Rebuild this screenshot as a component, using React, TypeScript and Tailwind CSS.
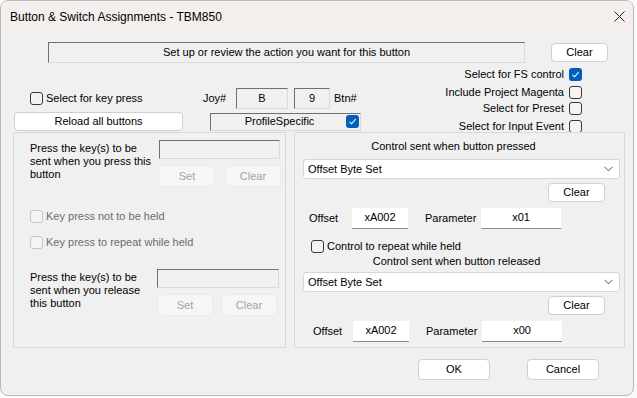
import React from "react";

const font = "font-['Liberation_Sans',Arial,sans-serif] text-[11px] leading-none text-black";

function Check({ checked = false, disabled = false }: { checked?: boolean; disabled?: boolean }) {
  if (checked) {
    return (
      <span className="flex h-[13px] w-[13px] shrink-0 items-center justify-center rounded-[3px] bg-[#005fb8]">
        <svg width="9" height="9" viewBox="0 0 9 9" fill="none">
          <path d="M1.5 4.8 L3.6 6.8 L7.6 2.2" stroke="#fff" strokeWidth="1.1" />
        </svg>
      </span>
    );
  }
  return (
    <span
      className={
        "h-[13px] w-[13px] shrink-0 rounded-[3px] border bg-[#f4f4f4] " +
        (disabled ? "border-[#c4c4c4]" : "border-[#3a3a3a]")
      }
    />
  );
}

function Btn({ label, className = "", disabled = false }: { label: string; className?: string; disabled?: boolean }) {
  return (
    <div
      className={
        "flex items-center justify-center rounded-[4px] border " +
        (disabled ? "border-[#ececec] bg-[#f6f6f6] text-[#a2a2a2] " : "border-[#d0d0d0] bg-white ") +
        className
      }
    >
      {label}
    </div>
  );
}

function Sunken({ children, className = "" }: { children?: React.ReactNode; className?: string }) {
  return (
    <div
      className={
        "flex items-center justify-center border border-t-[#6f6f6f] border-l-[#6f6f6f] border-r-[#dadada] border-b-[#dadada] " +
        className
      }
    >
      {children}
    </div>
  );
}

function Field({ value, className = "" }: { value: string; className?: string }) {
  return (
    <div className={"flex h-[21px] items-center justify-center border-b border-[#8a8a8a] bg-white pb-[2px] " + className}>
      {value}
    </div>
  );
}

function Combo({ value }: { value: string }) {
  return (
    <div className="ml-[8px] flex h-[20px] w-[317px] items-center justify-between rounded-[3px] border border-[#d6d6d6] bg-white pl-[4px] pr-[6px]">
      <span>{value}</span>
      <svg width="9" height="6" viewBox="0 0 9 6" fill="none">
        <path d="M0.5 0.8 L4.5 4.8 L8.5 0.8" stroke="#555" strokeWidth="1" />
      </svg>
    </div>
  );
}

function KeyBlock({ lines, gap, second }: { lines: string[]; gap: number; second?: boolean }) {
  return (
    <div className="flex">
      <div className={(second ? "w-[127px]" : "w-[129px]") + " pt-[2px] leading-[13px]"}>
        {lines.map((l) => (
          <div key={l}>{l}</div>
        ))}
      </div>
      <div className="flex flex-col">
        <Sunken className={(second ? "w-[122px]" : "w-[121px]") + " h-[19px]"} />
        <div className={"mt-[6px] flex " + (gap === 10 ? "gap-[10px]" : "gap-[8px]")}>
          <Btn label="Set" disabled className="h-[22px] w-[56px]" />
          <Btn label="Clear" disabled className="h-[22px] w-[56px]" />
        </div>
      </div>
    </div>
  );
}

function ControlBlock({ title, param, first }: { title: string; param: string; first: boolean }) {
  return (
    <div className="flex flex-col">
      <div className={"flex h-[14px] items-center justify-center " + (first ? "pr-[12px]" : "pr-[6px]")}>{title}</div>
      <div className={first ? "mt-[6px]" : "mt-[4px]"}>
        <Combo value="Offset Byte Set" />
      </div>
      <div className="mt-[4px] flex justify-end pr-[19px]">
        <Btn label="Clear" className="h-[19px] w-[57px]" />
      </div>
      <div className={"mt-[6px] flex items-center " + (first ? "pl-[14px]" : "pl-[18px]")}>
        <span className={first ? "w-[43px]" : "w-[40px]"}>Offset</span>
        <Field value="xA002" className="w-[56px]" />
        <span className="ml-[17px] w-[56px]">Parameter</span>
        <Field value={param} className="w-[80px]" />
      </div>
    </div>
  );
}

export default function App() {
  return (
    <div className={"h-[398px] w-[637px] bg-[#fafafa] " + font}>
      <div className="flex h-[396px] w-[634px] flex-col overflow-hidden rounded-[8px] border border-[#b9b9b9] bg-[#f0f0f0]">
        {/* title bar */}
        <div className="flex h-[31px] shrink-0 items-center justify-between bg-[#f4efed] pl-[9px] pr-[8px]">
          <span className="text-[12px]">Button &amp; Switch Assignments - TBM850</span>
          <svg width="11" height="11" viewBox="0 0 11 11">
            <path d="M0.5 0.5 L10.5 10.5 M10.5 0.5 L0.5 10.5" stroke="#222" strokeWidth="1" />
          </svg>
        </div>

        {/* status row */}
        <div className="mt-[10px] flex items-start">
          <Sunken className="ml-[47px] h-[21px] w-[477px]">Set up or review the action you want for this button</Sunken>
          <Btn label="Clear" className="ml-[26px] mt-[1px] h-[19px] w-[57px]" />
        </div>

        {/* options */}
        <div className="flex h-[69px]">
          <div className="flex w-[370px] flex-col pt-[25px]">
            <div className="flex h-[20px] items-center">
              <div className="ml-[29px] flex w-[173px] items-center gap-[3px]">
                <Check />
                <span>Select for key press</span>
              </div>
              <span className="w-[33px]">Joy#</span>
              <Sunken className="h-[21px] w-[52px]">B</Sunken>
              <Sunken className="ml-[6px] h-[21px] w-[36px]">9</Sunken>
              <span className="ml-[4px]">Btn#</span>
            </div>
            <div className="mt-[4px] flex items-center">
              <Btn label="Reload all buttons" className="ml-[13px] h-[19px] w-[169px]" />
              <Sunken className="relative ml-[27px] h-[18px] w-[151px] pr-[12px]">
                ProfileSpecific
                <span className="absolute right-[1px] top-[1px]">
                  <Check checked />
                </span>
              </Sunken>
            </div>
          </div>
          <div className="flex flex-1 flex-col items-end pr-[51px] pt-[5px]">
            <div className="flex h-[13px] items-center gap-[5px]">
              <span>Select for FS control</span>
              <Check checked />
            </div>
            <div className="mt-[5px] flex h-[13px] items-center gap-[5px]">
              <span>Include Project Magenta</span>
              <Check />
            </div>
            <div className="mt-[3px] flex h-[13px] items-center gap-[5px]">
              <span>Select for Preset</span>
              <Check />
            </div>
            <div className="mt-[5px] flex h-[13px] items-center gap-[5px]">
              <span>Select for Input Event</span>
              <Check />
            </div>
          </div>
        </div>

        {/* groups */}
        <div className="flex gap-[8px] pl-[12px]">
          <div className="flex h-[216px] w-[273px] flex-col border border-[#d9d9d9] pl-[16px] pt-[7px]">
            <KeyBlock lines={["Press the key(s) to be", "sent when you press this", "button"]} gap={10} />
            <div className="mt-[21px] flex h-[16px] items-center gap-[3px] text-[#6d6d6d]">
              <Check disabled />
              <span>Key press not to be held</span>
            </div>
            <div className="mt-[10px] flex h-[16px] items-center gap-[3px] text-[#6d6d6d]">
              <Check disabled />
              <span>Key press to repeat while held</span>
            </div>
            <div className="mt-[19px]">
              <KeyBlock lines={["Press the key(s) to be", "sent when you release", "this button"]} gap={8} second />
            </div>
          </div>

          <div className="flex h-[216px] w-[331px] flex-col border border-[#d9d9d9] pt-[6px]">
            <ControlBlock title="Control sent when button pressed" param="x01" first />
            <div className="mt-[10px] flex h-[14px] items-center gap-[3px] pl-[16px]">
              <Check />
              <span>Control to repeat while held</span>
            </div>
            <div className="mt-[1px]">
              <ControlBlock title="Control sent when button released" param="x00" first={false} />
            </div>
          </div>
        </div>

        {/* footer */}
        <div className="mt-[11px] flex">
          <Btn label="OK" className="ml-[417px] h-[21px] w-[72px]" />
          <Btn label="Cancel" className="ml-[37px] h-[21px] w-[72px]" />
        </div>
      </div>
    </div>
  );
}
